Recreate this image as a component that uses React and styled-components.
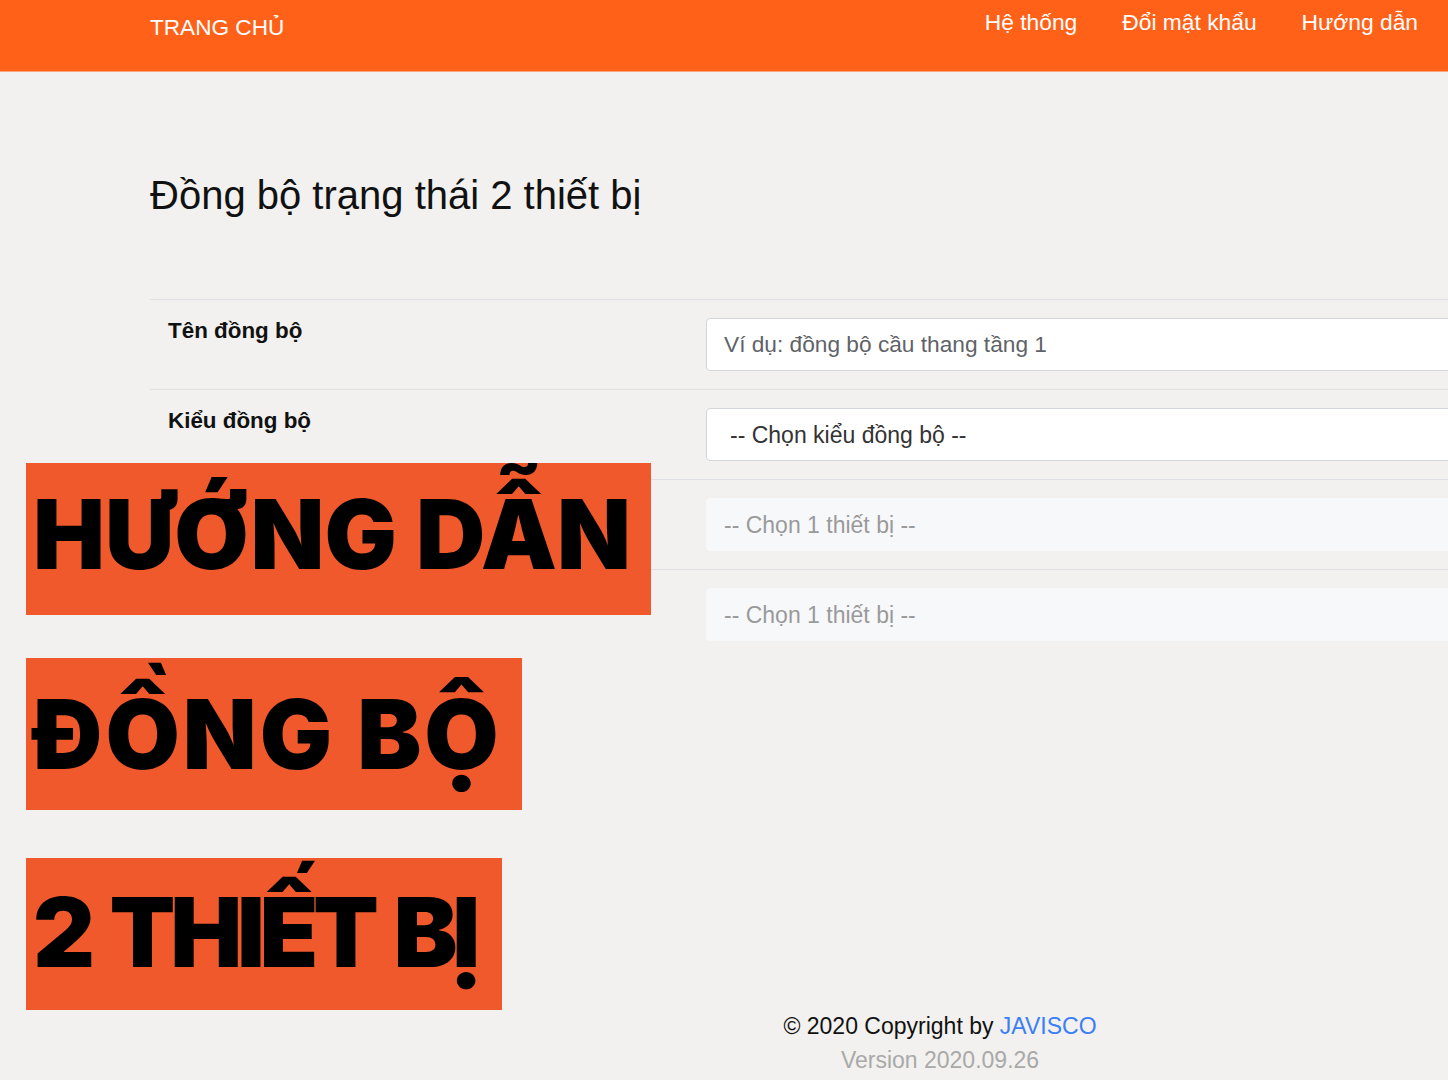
import styled, { createGlobalStyle } from "styled-components";

const GlobalStyle = createGlobalStyle`
  html, body {
    margin: 0;
    padding: 0;
    background: #f2f1ef;
    overflow-x: hidden;
  }
  body {
    font-family: "Liberation Sans", Arial, sans-serif;
    color: #111;
  }
`;

const Header = styled.header`
  height: 71px;
  background: #ff6119;
  border-bottom: 1px solid #f9a47c;
  display: flex;
  justify-content: space-between;
  align-items: flex-start;
  padding: 0 30px 0 150px;
`;

const Brand = styled.a`
  margin-top: 14px;
  font-size: 22.6px;
  line-height: 1.2;
  color: #fff;
  text-decoration: none;
`;

const Nav = styled.nav`
  display: flex;
  gap: 45px;
  margin-top: 9px;
`;

const NavLink = styled.a`
  font-size: 22.8px;
  line-height: 1.2;
  color: #fff;
  text-decoration: none;
`;

const Page = styled.main`
  position: relative;
  width: 1580px;
  margin-left: 150px;
`;

const Title = styled.h1`
  margin: 99px 0 80px;
  font-size: 40px;
  line-height: 1.2;
  font-weight: 400;
  color: #111;
`;

const Row = styled.div`
  display: grid;
  grid-template-columns: 556px 1fr;
  border-top: 1px solid #dfe0e3;
  padding: 18px 0;
`;

const Label = styled.label`
  padding-left: 18px;
  font-size: 22.4px;
  line-height: 1.2;
  font-weight: 700;
  color: #111;
`;

const Input = styled.input`
  box-sizing: border-box;
  height: 53px;
  width: 100%;
  padding: 0 17px;
  font-family: inherit;
  font-size: 22.7px;
  border: 1px solid #d3d6da;
  border-radius: 4px;
  background: #fff;
  outline: none;

  &::placeholder {
    color: #5f6368;
  }
`;

const Select = styled.select`
  box-sizing: border-box;
  height: 53px;
  width: 100%;
  padding: 0 19px;
  padding-left: ${(p) => (p.disabled ? "17px" : "23px")};
  font-family: inherit;
  font-size: 23px;
  color: ${(p) => (p.disabled ? "#9a9a9a" : "#333")};
  border: 1px solid ${(p) => (p.disabled ? "#f7f8fa" : "#d3d6da")};
  border-radius: 4px;
  background: ${(p) => (p.disabled ? "#f7f8fa" : "#fff")};
  appearance: none;
  opacity: 1;
`;

const Footer = styled.footer`
  margin-top: 350px;
  padding-bottom: 10px;
  text-align: center;
  font-size: 23px;
  line-height: 34px;
  color: #111;
`;

const Brandlink = styled.a`
  color: #3a7ff5;
  text-decoration: none;
`;

const Version = styled.div`
  color: #a9a9a9;
`;

const Banners = styled.div`
  position: absolute;
  left: 26px;
  top: 463px;
  display: flex;
  flex-direction: column;
  align-items: flex-start;
`;

const Banner = styled.div`
  box-sizing: border-box;
  width: ${(p) => p.$width}px;
  height: 152px;
  margin-top: ${(p) => p.$gap || 0}px;
  padding: ${(p) => p.$top}px 0 0 7px;
  background: #f0592b;
  color: #000;
  font-family: Inter, "Noto Sans", sans-serif;
  font-weight: 900;
  font-size: 96px;
  line-height: 96px;
  letter-spacing: ${(p) => p.$spacing}px;
  word-spacing: ${(p) => p.$words || 0}px;
  white-space: nowrap;
  overflow: hidden;
`;

export default function App() {
  return (
    <>
      <GlobalStyle />
      <Header>
        <Brand href="#">TRANG CHỦ</Brand>
        <Nav>
          <NavLink href="#">Hệ thống</NavLink>
          <NavLink href="#">Đổi mật khẩu</NavLink>
          <NavLink href="#">Hướng dẫn</NavLink>
        </Nav>
      </Header>
      <Page>
        <Title>Đồng bộ trạng thái 2 thiết bị</Title>
        <Row>
          <Label>Tên đồng bộ</Label>
          <Input placeholder="Ví dụ: đồng bộ cầu thang tầng 1" />
        </Row>
        <Row>
          <Label>Kiểu đồng bộ</Label>
          <Select defaultValue="">
            <option value="">-- Chọn kiểu đồng bộ --</option>
          </Select>
        </Row>
        <Row>
          <Label />
          <Select disabled defaultValue="">
            <option value="">-- Chọn 1 thiết bị --</option>
          </Select>
        </Row>
        <Row>
          <Label />
          <Select disabled defaultValue="">
            <option value="">-- Chọn 1 thiết bị --</option>
          </Select>
        </Row>
        <Footer>
          <div>
            © 2020 Copyright by <Brandlink href="#">JAVISCO</Brandlink>
          </div>
          <Version>Version 2020.09.26</Version>
        </Footer>
      </Page>
      <Banners>
        <Banner $width={625} $top={23} $spacing={0}>HƯỚNG DẪN</Banner>
        <Banner $width={496} $gap={43} $top={28} $spacing={3}>ĐỒNG BỘ</Banner>
        <Banner $width={476} $gap={48} $top={26} $spacing={-5.3} $words={6}>
          2 THIẾT BỊ
        </Banner>
      </Banners>
    </>
  );
}
